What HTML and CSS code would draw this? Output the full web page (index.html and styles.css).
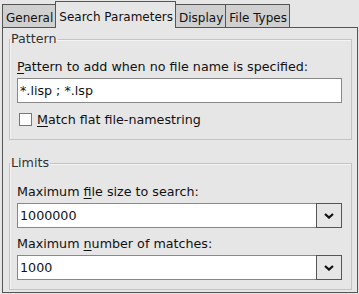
FILE: index.html
```html
<!DOCTYPE html>
<html lang="en">
<head>
    <meta charset="UTF-8">
    <title>Search Parameters</title>
    <link rel="stylesheet" href="styles.css">
</head>
<body>
    <div class="tabs">
        <div class="tab">General</div>
        <div class="tab active">Search Parameters</div>
        <div class="tab">Display</div>
        <div class="tab">File Types</div>
    </div>

    <div class="panel">
        <fieldset class="frame pattern-frame">
            <legend>Pattern</legend>
            <div class="field-label"><u>P</u>attern to add when no file name is specified:</div>
            <div class="entry">*.lisp ; *.lsp</div>
            <label class="check-row">
                <span class="checkbox"></span>
                <span><u>M</u>atch flat file-namestring</span>
            </label>
        </fieldset>

        <fieldset class="frame limits-frame">
            <legend>Limits</legend>
            <div class="field-label">Maximum <u>f</u>ile size to search:</div>
            <div class="combo">
                <div class="entry combo-entry">1000000</div>
                <div class="combo-button">
                    <svg width="10" height="6" viewBox="0 0 10 6"><path d="M1 1 L5 4.6 L9 1" fill="none" stroke="#111" stroke-width="2.2"/></svg>
                </div>
            </div>
            <div class="field-label second">Maximum <u>n</u>umber of matches:</div>
            <div class="combo">
                <div class="entry combo-entry">1000</div>
                <div class="combo-button">
                    <svg width="10" height="6" viewBox="0 0 10 6"><path d="M1 1 L5 4.6 L9 1" fill="none" stroke="#111" stroke-width="2.2"/></svg>
                </div>
            </div>
        </fieldset>
    </div>
</body>
</html>
```

FILE: styles.css
```css
* {
    box-sizing: border-box;
}
body {
    margin: 0;
    width: 359px;
    height: 294px;
    background-color: #e6e6e6;
    font-family: "DejaVu Sans", sans-serif;
    font-size: 12.7px;
    color: #111;
    overflow: hidden;
}
u {
    text-decoration: underline;
    text-underline-offset: 2px;
}
.tabs {
    display: flex;
    align-items: flex-end;
    height: 27px;
    padding-left: 2px;
}
.tab {
    font-size: 12px;
    line-height: 14px;
    padding: 6px 2px 2px 3px;
    background-color: #d0d0d0;
    border: 1px solid #555;
    border-bottom: none;
    margin-right: -1px;
}
.tab.active {
    padding-top: 8px;
    padding-bottom: 4px;
    background-color: #e6e6e6;
    position: relative;
    z-index: 1;
    margin-bottom: -1px;
}
.panel {
    margin-left: 2px;
    width: 356px;
    height: 266px;
    border: 1px solid #555;
    padding: 0 5px 0 6px;
}
.frame {
    margin: 4px 0 0 0;
    padding: 12px 9px 12px 7px;
    border: 1px solid #c4c4c4;
    box-shadow: inset 1px 1px 0 #f4f4f4;
}
.frame legend {
    padding: 0 1px;
    margin-left: -7px;
    line-height: 14px;
    color: #333;
}
.limits-frame {
    margin-top: 16px;
    padding-top: 13px;
    padding-bottom: 9px;
}
.field-label {
    line-height: 17px;
}
.field-label.second {
    margin-top: 7px;
}
.entry {
    height: 25px;
    line-height: 23px;
    padding: 0 2px;
    background: #fff;
    border: 1px solid #888;
    margin-top: 3px;
}
.check-row {
    display: flex;
    align-items: center;
    gap: 5px;
    height: 15px;
    margin-top: 9px;
    padding-left: 2px;
}
.checkbox {
    width: 13px;
    height: 13px;
    background: #fff;
    border: 1px solid #777;
}
.combo {
    display: flex;
    margin-top: 3px;
}
.combo-entry {
    flex-grow: 1;
    margin-top: 0;
}
.combo-button {
    width: 26px;
    height: 25px;
    margin-left: -1px;
    border: 1px solid #555;
    display: flex;
    align-items: center;
    justify-content: center;
    background: #e6e6e6;
}
```
